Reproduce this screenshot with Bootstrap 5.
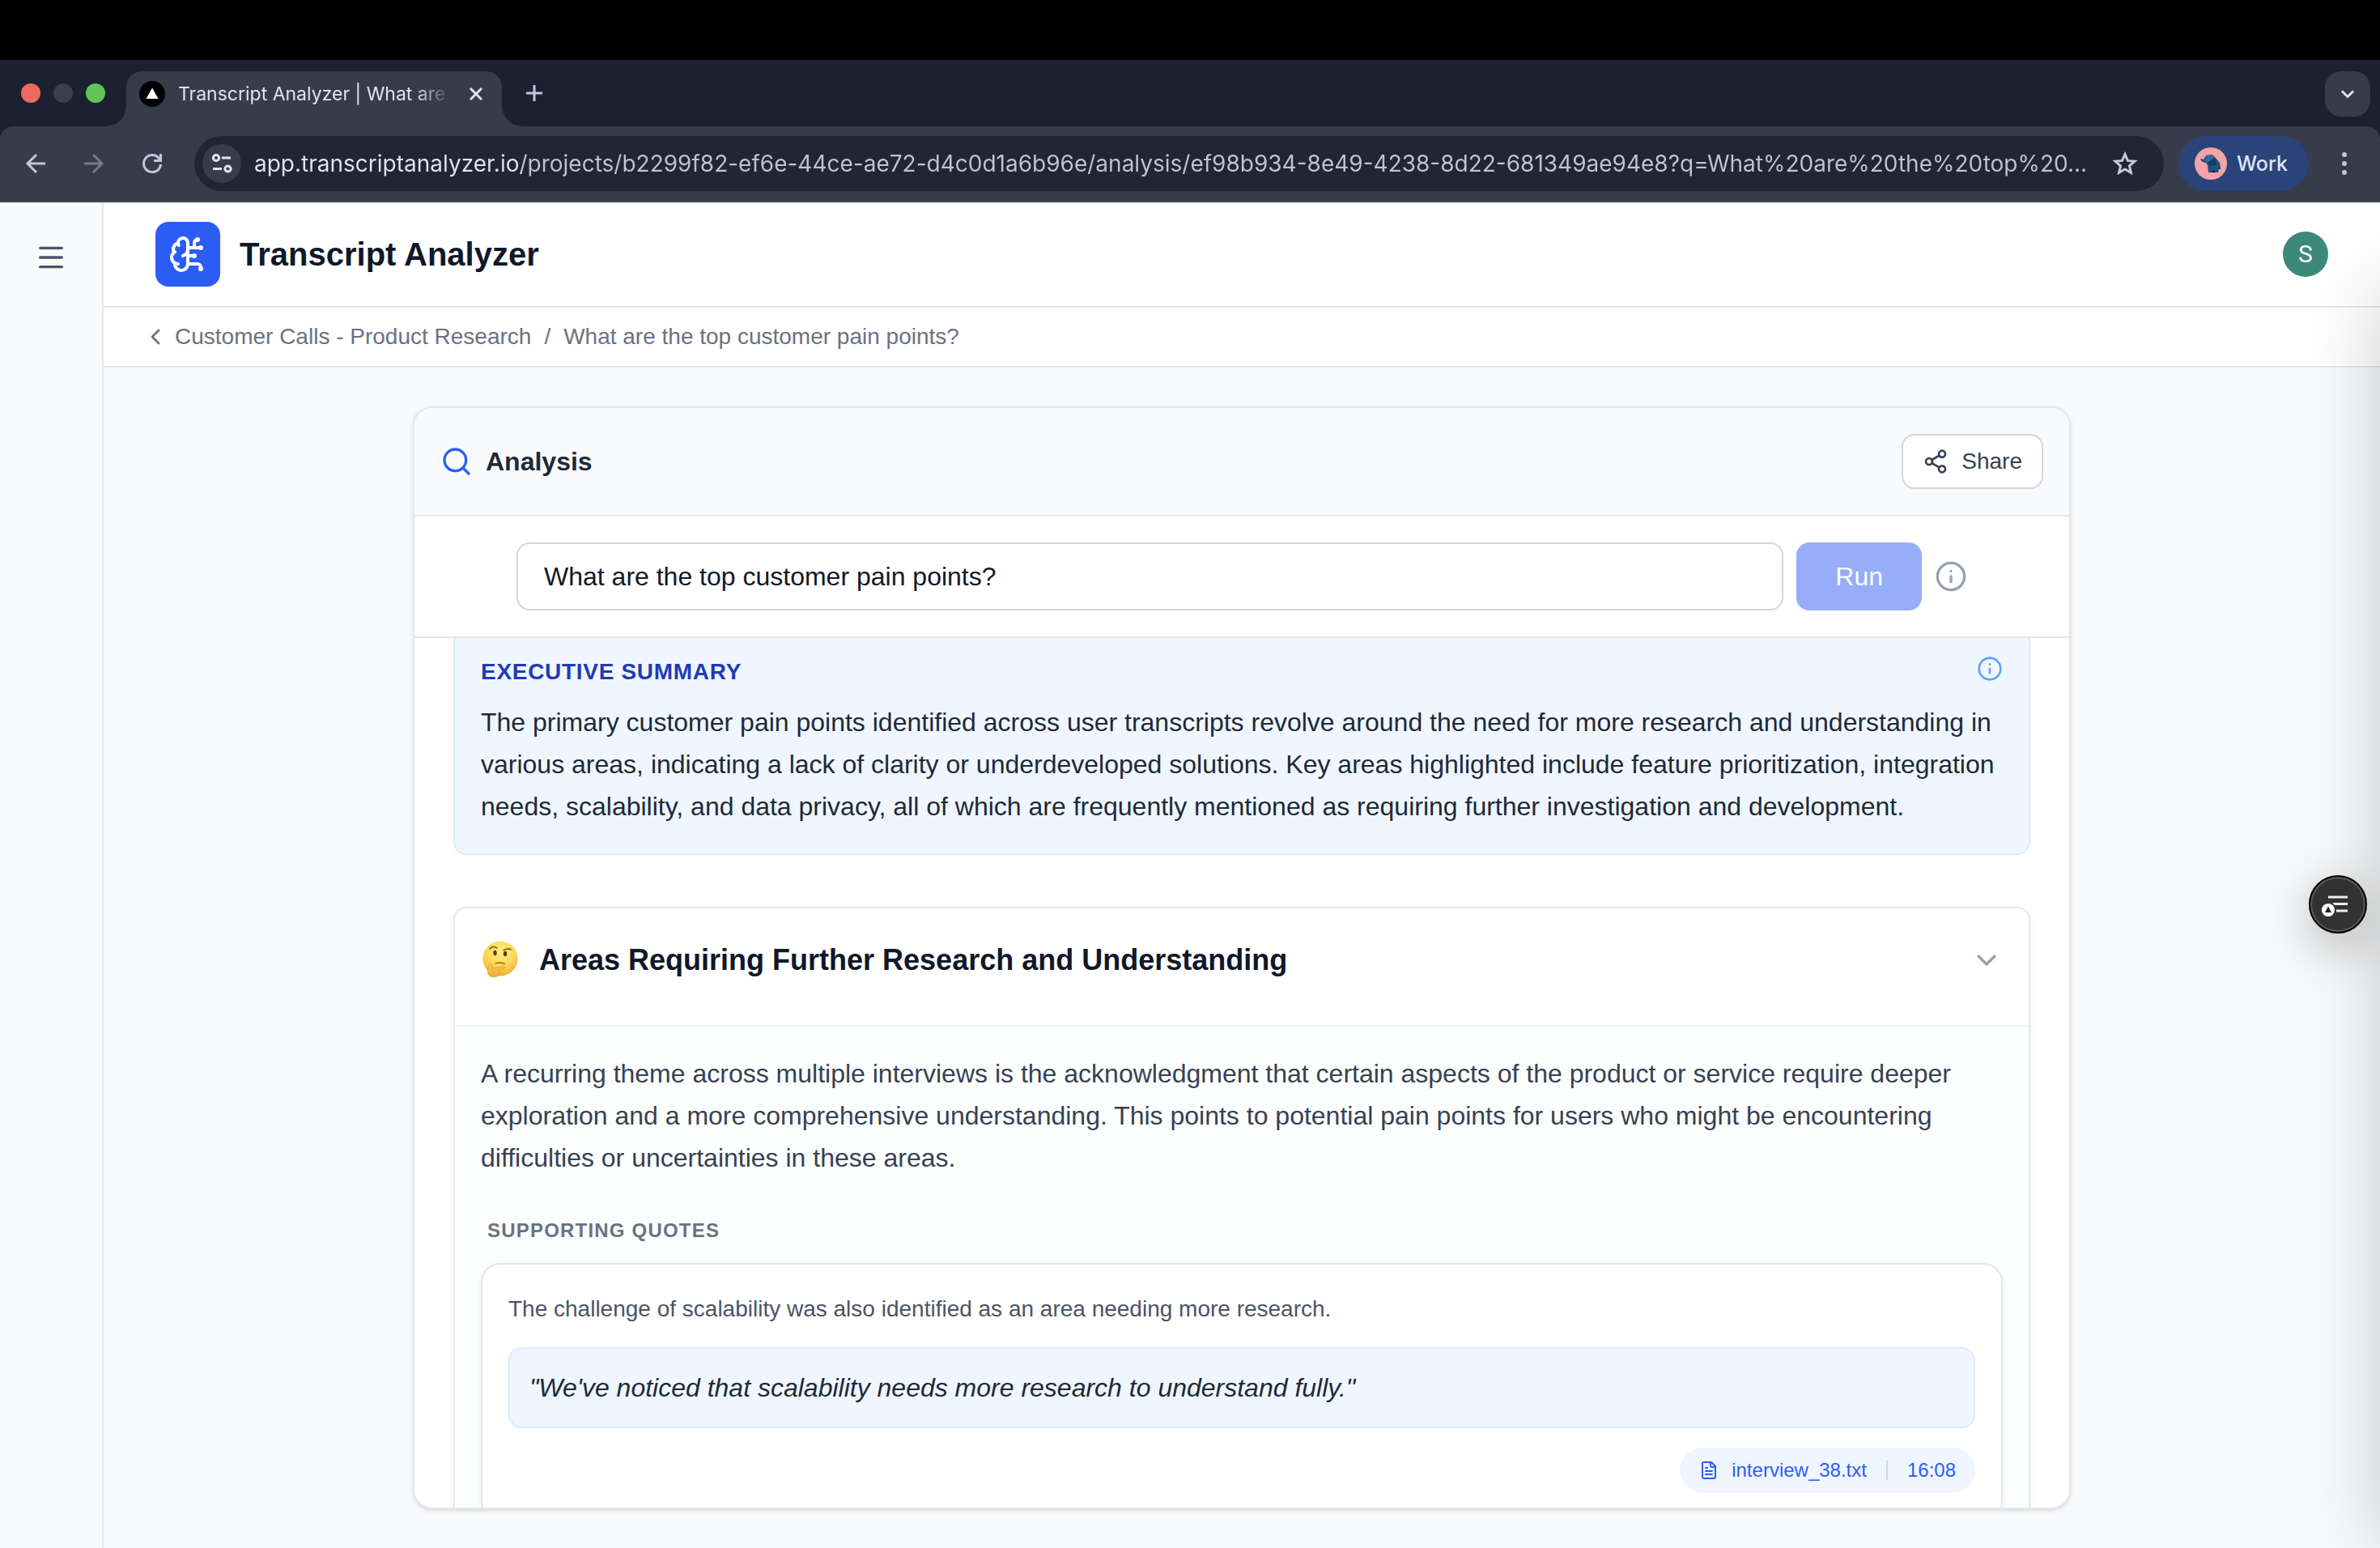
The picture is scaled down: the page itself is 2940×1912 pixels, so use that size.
<!DOCTYPE html>
<html lang="en">
<head>
<meta charset="utf-8">
<meta name="viewport" content="width=device-width, initial-scale=1">
<title>Transcript Analyzer | What are the top customer pain points?</title>
<link href="https://cdn.jsdelivr.net/npm/bootstrap@5.3.0/dist/css/bootstrap.min.css" rel="stylesheet">
<style>
  :root {
    --strip: #1b2130;
    --bar: #373c4b;
    --omni: #202635;
    --chrome-ink: #e3e4ea;
    --chrome-icon: #c3c7de;
    --line: #e5e7eb;
    --page: #f9fafb;
    --blue: #2b5df5;
  }
  body { font-family: "Liberation Sans", Arial, sans-serif; font-size: 32px; line-height: 52px; color: #101828; background: var(--page); }
  svg { display: block; flex: none; }
  .ico { fill: none; stroke: currentColor; stroke-width: 2; stroke-linecap: round; stroke-linejoin: round; }
  .plain-btn { background: none; border: 0; padding: 0; line-height: 0; color: inherit; }

  /* browser frame */
  .browser { font-family: Inter, Roboto, sans-serif; background: var(--strip); line-height: 32px; }
  .notch { height: 74px; background: #000; }
  .tab-strip { height: 82px; padding: 14px 12px 0 26px; }
  .lights { gap: 16px; height: 54px; margin-right: 26px; }
  .light { width: 24px; height: 24px; border-radius: 50%; }
  .page-tab { position: relative; width: 464px; height: 68px; padding: 0 20px 12px 16px; gap: 16px; background: var(--bar); border-radius: 20px 20px 0 0; color: var(--chrome-ink); }
  .page-tab::before, .page-tab::after { content: ""; position: absolute; bottom: 0; width: 24px; height: 24px; }
  .page-tab::before { right: 100%; background: radial-gradient(circle at 0 0, transparent 23px, var(--bar) 24px); }
  .page-tab::after { left: 100%; background: radial-gradient(circle at 100% 0, transparent 23px, var(--bar) 24px); }
  .tab-title { flex: 1; white-space: nowrap; font-size: 23px; -webkit-mask-image: linear-gradient(to right, #000 86%, transparent 99%); mask-image: linear-gradient(to right, #000 86%, transparent 99%); }
  .new-tab { margin: 0 0 14px 26px; color: var(--chrome-icon); }
  .tab-list { width: 56px; height: 56px; border-radius: 20px; background: var(--bar); color: var(--chrome-ink); margin-bottom: 12px; }
  .toolbar { height: 94px; padding: 0 28px; background: var(--bar); border-bottom: 2px solid #46484f; border-radius: 16px 16px 0 0; color: var(--chrome-icon); }
  .nav-keys { gap: 40px; margin-right: 36px; }
  .omnibox { height: 68px; border-radius: 34px; background: var(--omni); padding: 0 32px 0 10px; gap: 16px; color: var(--chrome-ink); }
  .site-info { width: 48px; height: 48px; border-radius: 50%; background: var(--bar); }
  .url-field { flex: 1; min-width: 0; border: 0; padding: 0; outline: 0; font-size: 28px; text-overflow: ellipsis; color: #c9cbd2; background: linear-gradient(to right, #e6e6ec 330px, #c3c5cc 330px); -webkit-background-clip: text; background-clip: text; -webkit-text-fill-color: transparent; }
  .profile { height: 68px; border: 0; border-radius: 34px; background: #294479; color: #dfe4fb; padding: 0 26px 0 20px; gap: 12px; margin: 0 28px 0 18px; font-size: 25px; font-weight: 500; }

  /* application */
  .app { position: relative; overflow: hidden; min-height: 0; }
  .side-rail { width: 128px; border-right: 2px solid var(--line); padding-top: 48px; color: #4a5565; }
  .app-header { height: 130px; padding: 0 64px; border-bottom: 2px solid var(--line); gap: 24px; background: #fff; }
  .brand-tile { width: 80px; height: 80px; border-radius: 16px; background: var(--blue); color: #fff; }
  .brand-name { font-size: 40px; font-weight: 700; margin: 0; }
  .user-disc { width: 56px; height: 56px; border-radius: 50%; background: #3d887a; color: #fff; font: 400 30px/56px Roboto, sans-serif; text-align: center; border: 0; padding: 0; }
  .crumbs { height: 74px; padding: 0 48px; border-bottom: 2px solid var(--line); background: #fff; font-size: 28px; line-height: 40px; color: #6a7282; gap: 8px; }
  .crumbs a { color: inherit; text-decoration: none; }
  .crumbs ol { gap: 16px; }
  .stage { padding: 48px; min-height: 0; }
  .panel { max-width: 2048px; min-height: 0; border: 2px solid var(--line); border-radius: 24px; background: #fff; overflow: hidden; box-shadow: 0 2px 6px rgba(0,0,0,.1), 0 2px 4px -2px rgba(0,0,0,.1); }
  .panel-head { padding: 32px; background: var(--page); border-bottom: 2px solid var(--line); }
  .panel-head h2 { font-size: 32px; font-weight: 700; margin: 0; color: #1e2939; }
  .share-btn { height: 68px; border: 2px solid #d1d5dc; border-radius: 16px; background: #fff; color: #364153; font-size: 28px; line-height: 40px; padding: 0 24px; gap: 16px; }
  .ask { padding: 32px; border-bottom: 2px solid var(--line); }
  .ask-row { max-width: 1792px; gap: 16px; }
  .ask-input { height: 84px; border: 2px solid #d1d5dc; border-radius: 16px; padding: 0 32px; font-size: 32px; color: #101828; }
  .run-btn, .run-btn:disabled { height: 84px; border: 0; border-radius: 16px; padding: 0 48px; font-size: 32px; color: #fff; background: #96adfa; opacity: 1; }
  .results { padding: 48px; overflow-y: auto; scrollbar-width: none; min-height: 0; flex: 1 1 0; }
  .results::-webkit-scrollbar { display: none; }
  .summary { background: #eff6ff; border: 2px solid #dbeafe; border-radius: 16px; padding: 32px; margin-bottom: 64px; color: #1e2939; }
  .summary h3 { font-size: 28px; line-height: 40px; font-weight: 700; letter-spacing: .025em; color: #1f3bb3; margin: 0 0 16px; text-transform: uppercase; }
  .summary p, .theme p { margin: 0; }
  .theme { border: 2px solid var(--line); border-radius: 16px; background: #fff; overflow: hidden; box-shadow: 0 2px 6px rgba(0,0,0,.08); }
  .theme-head { padding: 32px 32px 48px; border-bottom: 2px solid #f3f4f6; gap: 24px; }
  .theme-head h3 { font-size: 36px; line-height: 64px; font-weight: 700; margin: 0; }
  .theme-body { padding: 32px; background: #fcfefd; color: #364153; }
  .quotes-label { font-size: 24px; line-height: 32px; font-weight: 700; letter-spacing: .05em; text-transform: uppercase; color: #6a7282; margin: 48px 8px 24px; }
  .quote-box { border: 2px solid var(--line); border-radius: 24px; background: #fff; padding: 32px; box-shadow: 0 2px 6px rgba(0,0,0,.08); }
  .quote-box .note { font-size: 28px; line-height: 46px; color: #4a5565; margin-bottom: 24px; }
  .quote-text { background: #eff6ff; border: 2px solid #dbeafe; border-radius: 16px; padding: 24px; margin: 0 0 24px; line-height: 48px; font-style: italic; color: #1e2939; }
  .source { height: 56px; border-radius: 28px; padding: 0 24px; background: #eff6ff; color: var(--blue); font-size: 24px; line-height: 32px; text-decoration: none; }
  .source .rule { width: 2px; height: 24px; background: #bedbff; margin: 0 24px; }

  /* docked assistant: its launcher, and the drawer waiting beyond the right edge */
  .drawer { position: absolute; left: 100%; top: 110px; bottom: 0; width: 400px; box-shadow: 0 0 90px rgba(0,0,0,.2); pointer-events: none; }
  .launcher { position: absolute; right: 16px; top: 50%; width: 72px; height: 72px; border-radius: 50%; border: 2px solid #000; background: #323232; box-shadow: inset 0 0 0 2px #5c5c5c, 0 16px 64px rgba(0,0,0,.3); padding: 0; }
</style>
<script src="https://cdn.jsdelivr.net/npm/bootstrap@5.3.0/dist/js/bootstrap.bundle.min.js"></script>
</head>
<body class="vh-100 d-flex flex-column overflow-hidden">

<header class="browser flex-shrink-0">
  <div class="notch"></div>
  <div class="tab-strip d-flex align-items-center">
    <div class="lights d-flex align-items-center align-self-start">
      <span class="light" style="background:#ec6a5e"></span>
      <span class="light" style="background:#3a3f4c"></span>
      <span class="light" style="background:#61c554"></span>
    </div>
    <div class="page-tab d-flex align-items-center">
      <svg width="32" height="32" viewBox="0 0 32 32"><circle cx="16" cy="16" r="16" fill="#000"/><path d="M16 8.500 23.500 22h-15z" fill="#fff"/></svg>
      <span class="tab-title">Transcript Analyzer | What are</span>
      <button class="plain-btn" type="button" aria-label="Close tab"><svg width="24" height="24" viewBox="0 0 24 24" fill="none" stroke="currentColor" stroke-width="3"><path d="m5 5 14 14M19 5 5 19"/></svg></button>
    </div>
    <button class="plain-btn new-tab" type="button" aria-label="New tab"><svg width="28" height="28" viewBox="0 0 28 28" fill="none" stroke="currentColor" stroke-width="3"><path d="M14 4v20M4 14h20"/></svg></button>
    <button class="plain-btn tab-list ms-auto d-flex align-items-center justify-content-center" type="button" aria-label="Search tabs"><svg width="24" height="24" viewBox="0 0 24 24" fill="none" stroke="currentColor" stroke-width="3"><path d="m5 8.500 7 7 7-7"/></svg></button>
  </div>
  <div class="toolbar d-flex align-items-center">
    <div class="nav-keys d-flex align-items-center">
      <button class="plain-btn" type="button" aria-label="Back"><svg width="32" height="32" viewBox="0 0 32 32" fill="none" stroke="currentColor" stroke-width="3"><path d="M28 16H6M17 5 6 16l11 11"/></svg></button>
      <button class="plain-btn" type="button" aria-label="Forward"><svg width="32" height="32" viewBox="0 0 32 32" fill="none" stroke="#757989" stroke-width="3"><path d="M4 16h22M15 5l11 11-11 11"/></svg></button>
      <button class="plain-btn" type="button" aria-label="Reload"><svg width="32" height="32" viewBox="0 0 32 32" fill="none" stroke="currentColor" stroke-width="3"><path d="M26.500 17A10.500 10.500 0 1 1 24 9.200l2.500 2.800M26.500 4v8.500H18"/></svg></button>
    </div>
    <div class="omnibox d-flex align-items-center flex-grow-1">
      <button class="plain-btn site-info d-flex align-items-center justify-content-center" type="button" aria-label="Site information"><svg width="28" height="28" viewBox="0 0 28 28" fill="none" stroke="currentColor" stroke-width="3"><circle cx="7" cy="7" r="3.600"/><path d="M14 7h11M3 20.500h11"/><circle cx="21.500" cy="20.500" r="3.600"/></svg></button>
      <input class="url-field" type="text" aria-label="Address" value="app.transcriptanalyzer.io/projects/b2299f82-ef6e-44ce-ae72-d4c0d1a6b96e/analysis/ef98b934-8e49-4238-8d22-681349ae94e8?q=What%20are%20the%20top%20...">
      <button class="plain-btn" type="button" aria-label="Bookmark this page"><svg width="32" height="32" viewBox="0 0 32 32" fill="none" stroke="#c7c9d1" stroke-width="3"><path d="m16 4.500 3.400 7.900 8.600.8-6.500 5.700 1.900 8.400L16 22.900l-7.400 4.400 1.900-8.400L4 13.200l8.600-.8z"/></svg></button>
    </div>
    <button class="profile d-flex align-items-center" type="button">
      <svg width="40" height="40" viewBox="0 0 40 40"><circle cx="20" cy="20" r="20" fill="#f2a3a6"/><path d="m7 14 4 1 3-5 8-1 4 4 5 6 1 8h-2l-1 4H17l-1-9-2-3-4-1-3-3z" fill="#23507f"/><path d="m14 10 8-1 3 4-8 5-4-1z" fill="#34689c"/><path d="m17 18 8-5 2 9-9 1zM30 19l2 8h-2z" fill="#173a62"/><path d="M22 29h3v2h-4z" fill="#111c2e"/></svg>
      Work
    </button>
    <button class="plain-btn" type="button" aria-label="Browser menu"><svg width="32" height="32" viewBox="0 0 32 32" fill="currentColor"><circle cx="16" cy="5" r="3"/><circle cx="16" cy="16" r="3"/><circle cx="16" cy="27" r="3"/></svg></button>
  </div>
</header>

<div class="app d-flex flex-grow-1">
  <aside class="side-rail flex-shrink-0 d-flex flex-column align-items-center">
    <button class="plain-btn" type="button" aria-label="Open menu"><svg class="ico" width="40" height="40" viewBox="0 0 24 24"><path d="M4 5h16M4 12h16M4 19h16"/></svg></button>
  </aside>

  <div class="d-flex flex-column flex-grow-1">
    <div class="app-header d-flex align-items-center flex-shrink-0">
      <div class="brand-tile d-flex align-items-center justify-content-center">
        <svg class="ico" width="48" height="48" viewBox="0 0 24 24"><path d="M12 5a3 3 0 1 0-5.997.125 4 4 0 0 0-2.526 5.770 4 4 0 0 0 .556 6.588A4 4 0 1 0 12 18Z"/><path d="M9 13a4.500 4.500 0 0 0 3-4M6.003 5.125A3 3 0 0 0 6.401 6.500M3.477 10.896a4 4 0 0 1 .585-.396M6 18a4 4 0 0 1-1.967-.516M12 13h4M12 18h6a2 2 0 0 1 2 2v1M12 8h8M16 8V5a2 2 0 0 1 2-2"/><circle cx="16" cy="13" r=".5"/><circle cx="18" cy="3" r=".5"/><circle cx="20" cy="21" r=".5"/><circle cx="20" cy="8" r=".5"/></svg>
      </div>
      <h1 class="brand-name">Transcript Analyzer</h1>
      <button class="user-disc ms-auto" type="button" aria-label="Account S">S</button>
    </div>
    <nav class="crumbs d-flex align-items-center flex-shrink-0" aria-label="Breadcrumb">
      <svg class="ico" width="32" height="32" viewBox="0 0 24 24"><path d="m15 18-6-6 6-6"/></svg>
      <ol class="list-unstyled d-flex m-0">
        <li><a href="#">Customer Calls - Product Research</a></li>
        <li aria-hidden="true">/</li>
        <li aria-current="page">What are the top customer pain points?</li>
      </ol>
    </nav>

    <main class="stage d-flex flex-column flex-grow-1">
      <section class="panel w-100 mx-auto d-flex flex-column flex-grow-1">
        <div class="panel-head d-flex align-items-center gap-3">
          <svg class="ico" width="40" height="40" viewBox="0 0 24 24" style="color:var(--blue)"><circle cx="11" cy="11" r="8"/><path d="m21 21-4.300-4.300"/></svg>
          <h2>Analysis</h2>
          <button class="share-btn ms-auto d-flex align-items-center" type="button">
            <svg class="ico" width="32" height="32" viewBox="0 0 24 24"><circle cx="18" cy="5" r="3"/><circle cx="6" cy="12" r="3"/><circle cx="18" cy="19" r="3"/><path d="m8.590 13.510 6.830 3.980M15.410 6.510l-6.820 3.980"/></svg>
            Share
          </button>
        </div>
        <form class="ask">
          <div class="ask-row d-flex align-items-center mx-auto">
            <input class="ask-input flex-grow-1" type="text" aria-label="Question" value="What are the top customer pain points?">
            <button class="btn run-btn" type="submit" disabled>Run</button>
            <button class="plain-btn" type="button" aria-label="About questions" style="color:#99a1af"><svg class="ico" width="40" height="40" viewBox="0 0 24 24"><circle cx="12" cy="12" r="10"/><path d="M12 16v-4M12 8h.010"/></svg></button>
          </div>
        </form>
        <div class="results" id="results">
          <article class="summary">
            <div class="d-flex justify-content-between align-items-start">
              <h3>Executive Summary</h3>
              <button class="plain-btn" type="button" aria-label="About this summary" style="color:#61a0ff"><svg class="ico" width="32" height="32" viewBox="0 0 24 24"><circle cx="12" cy="12" r="10"/><path d="M12 16v-4M12 8h.010"/></svg></button>
            </div>
            <p>The primary customer pain points identified across user transcripts revolve around the need for more research and understanding in various areas, indicating a lack of clarity or underdeveloped solutions. Key areas highlighted include feature prioritization, integration needs, scalability, and data privacy, all of which are frequently mentioned as requiring further investigation and development.</p>
          </article>
          <article class="theme">
            <div class="theme-head d-flex align-items-center">
              <svg width="48" height="48" viewBox="0 1 48 48" role="img" aria-label="Thinking face">
                <defs><radialGradient id="face" cx=".5" cy=".3" r=".75"><stop offset="0" stop-color="#fff07c"/><stop offset=".6" stop-color="#fcd453"/><stop offset="1" stop-color="#efa834"/></radialGradient><linearGradient id="hand" x2="0" y2="1"><stop offset="0" stop-color="#fccb50"/><stop offset="1" stop-color="#f3a83e"/></linearGradient></defs>
                <circle cx="24" cy="23" r="21.500" fill="url(#face)"/>
                <ellipse cx="17.500" cy="16" rx="2.200" ry="3.300" fill="#5c3a10"/><ellipse cx="30" cy="17" rx="2.200" ry="3.300" fill="#5c3a10"/>
                <path d="M11 11c2-3 6-3.500 9-1M28 12.500c3-1.500 6-2 9-1" fill="none" stroke="#7a4b12" stroke-width="1.500" stroke-linecap="round"/>
                <path d="M18 29c4-1.300 8-1 11.500.5" fill="none" stroke="#7a4b12" stroke-width="1.200" stroke-linecap="round"/>
                <path d="M10 30c1-1 3-.5 3.500 1.500l1.500 3c4-.5 8.500-1.800 13-1.800 2 0 2 2.300 0 2.800l-6 1.500c2.500 1 2 2.200 1 3.200.5 3.500-2 5-5.500 5.300-5.500.5-9-1.500-9-6.300 0-3.500.5-7.200 1.500-9.200z" fill="url(#hand)" stroke="#dd9430" stroke-width=".7"/>
              </svg>
              <h3>Areas Requiring Further Research and Understanding</h3>
              <button class="plain-btn ms-auto" type="button" aria-label="Collapse section" style="color:#99a1af"><svg class="ico" width="40" height="40" viewBox="0 0 24 24"><path d="m6 9 6 6 6-6"/></svg></button>
            </div>
            <div class="theme-body">
              <p>A recurring theme across multiple interviews is the acknowledgment that certain aspects of the product or service require deeper exploration and a more comprehensive understanding. This points to potential pain points for users who might be encountering difficulties or uncertainties in these areas.</p>
              <h4 class="quotes-label">Supporting Quotes</h4>
              <div class="quote-box">
                <p class="note">The challenge of scalability was also identified as an area needing more research.</p>
                <blockquote class="quote-text">"We've noticed that scalability needs more research to understand fully."</blockquote>
                <div class="d-flex justify-content-end">
                  <a class="source d-flex align-items-center" href="#">
                    <svg class="ico me-3" width="24" height="24" viewBox="0 0 24 24"><path d="M15 2H6a2 2 0 0 0-2 2v16a2 2 0 0 0 2 2h12a2 2 0 0 0 2-2V7Z"/><path d="M14 2v4a2 2 0 0 0 2 2h4M10 9H8M16 13H8M16 17H8"/></svg>
                    <span>interview_38.txt</span><span class="rule"></span><span>16:08</span>
                  </a>
                </div>
              </div>
            </div>
          </article>
        </div>
      </section>
    </main>
  </div>

  <div class="drawer"></div>
  <button class="launcher" type="button" aria-label="Open assistant">
    <svg width="68" height="68" viewBox="0 0 68 68"><path d="M22 25h24M28 33.500h18M32 42h14" stroke="#eee" stroke-width="3"/><circle cx="22" cy="41" r="10" fill="#323232"/><circle cx="22" cy="41" r="8" fill="#fff"/><path d="m22 36.500 4 7.500h-8z" fill="#222"/></svg>
  </button>
</div>

<script>
  document.getElementById('results').scrollTop = 60;
</script>
</body>
</html>
